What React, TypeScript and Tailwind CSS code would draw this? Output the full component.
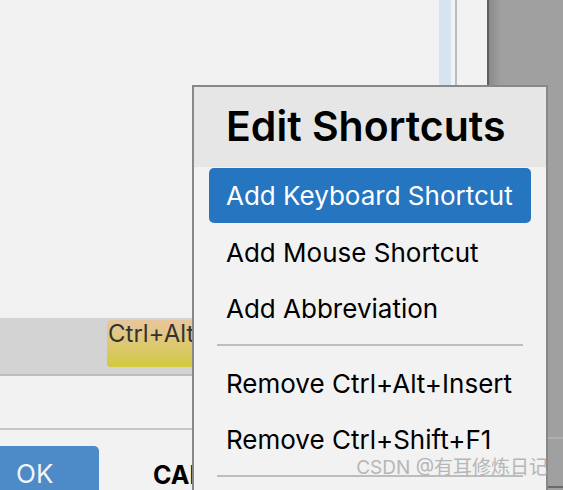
import React from 'react';

const font = { fontFamily: 'Inter, "Noto Sans", "Noto Sans CJK SC", sans-serif' };

const MenuRow: React.FC<{ label: string; active?: boolean }> = ({ label, active }) => (
  <div
    className={
      active
        ? 'h-[55px] mb-px rounded-[5px] bg-[#2675c0] text-white flex items-center pl-[17px] text-[26px]'
        : 'h-[56px] text-black flex items-center pl-[17px] text-[26px]'
    }
  >
    {label}
  </div>
);

const Separator: React.FC = () => (
  <div className="px-[8px] pt-[8px] pb-[9px]">
    <div className="h-[2px] bg-[#bdbdbd]" />
  </div>
);

export default function App() {
  return (
    <div className="relative w-[563px] h-[490px] overflow-hidden flex bg-[#a0a0a0]" style={font}>
      {/* dialog behind the popup */}
      <div className="w-[489px] h-full flex flex-col bg-[#f2f2f2] border-r-2 border-[#5f5f5f]">
        <div className="h-[318px] shrink-0 flex">
          <div className="flex-1" />
          <div className="w-[12px] bg-[#d6e3f1]" />
          <div className="w-[4px]" />
          <div className="w-[2px] bg-[#bcbcbc]" />
          <div className="w-[30px]" />
        </div>
        <div className="h-[58px] shrink-0 bg-[#d3d3d3] border-b-2 border-[#bdbdbd] flex items-start pl-[107px] pt-[2px]">
          <div className="h-[47px] w-[170px] rounded-[4px] bg-gradient-to-b from-[#e8c69c] to-[#d2c93a] text-[#333] text-[24px] leading-none pt-[2px] px-px">
            Ctrl+Alt+Insert
          </div>
        </div>
        <div className="h-[52px] shrink-0" />
        <div className="h-[2px] shrink-0 bg-[#c6c6c6]" />
        <div className="h-[16px] shrink-0" />
        <div className="flex items-start shrink-0">
          <div className="w-[99px] h-[48px] rounded-tr-[5px] bg-[#4d8ac8] text-[#f4f4f4] text-[26px] flex items-center pl-[16px] pt-[6px]">
            OK
          </div>
          <div className="pl-[54px] pt-[17px] text-[25px] font-bold text-black leading-none">CANCEL</div>
        </div>
      </div>
      {/* desktop to the right */}
      <div className="flex-1 h-full flex">
        <div className="w-[12px] bg-gradient-to-r from-[#8a8a8a] to-[#a0a0a0]" />
        <div className="flex-1" />
      </div>
      <div className="absolute left-[548px] right-0 top-[437px] h-[2px] bg-[#b0b0b0]" />
      <div className="absolute left-[548px] right-0 top-[486px] h-[2px] bg-[#6a6a6a]" />

      {/* popup menu */}
      <div className="absolute left-[192px] top-[85px] w-[356px] h-[420px] border-2 border-[#888] bg-[#f2f2f2]">
        <div className="h-[80px] bg-[#e6e6e6] flex items-center pl-[32px] pb-[1px] text-[41px] font-semibold text-black">
          Edit Shortcuts
        </div>
        <div className="px-[15px] pt-px">
          <MenuRow label="Add Keyboard Shortcut" active />
          <MenuRow label="Add Mouse Shortcut" />
          <MenuRow label="Add Abbreviation" />
          <Separator />
          <MenuRow label="Remove Ctrl+Alt+Insert" />
          <MenuRow label="Remove Ctrl+Shift+F1" />
          <Separator />
        </div>
      </div>

      <div className="absolute right-[15px] top-[458px] text-[19px] text-[#a8a8a8] opacity-80 leading-none">
        CSDN @有耳修炼日记
      </div>
    </div>
  );
}
